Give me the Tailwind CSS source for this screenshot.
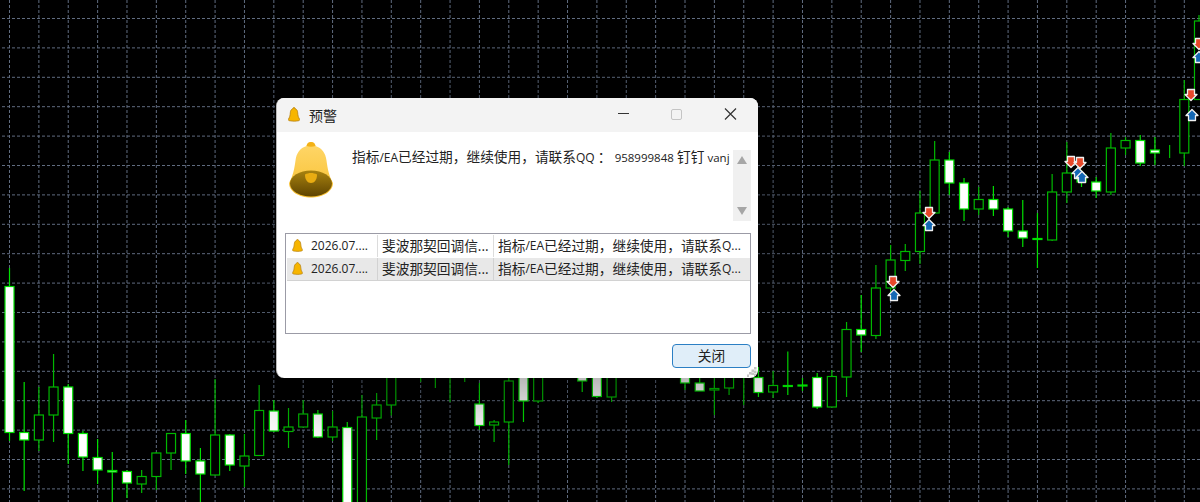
<!DOCTYPE html>
<html lang="en">
<head>
    <meta charset="UTF-8">
    <script src="https://cdn.jsdelivr.net/npm/@tailwindcss/browser@4"></script>
    <title>预警</title>
</head>
<body class="relative w-[1200px] h-[502px] overflow-hidden bg-black font-['Open_Sans','Noto_Sans_CJK_SC',sans-serif]">
    <!-- chart: grid + candles are filled in by the script at the bottom -->
    <svg id="chart" class="absolute inset-0" width="1200" height="502" viewBox="0 0 1200 502"></svg>

    <!-- alert window -->
    <div class="absolute left-[276px] top-[98px] w-[482px] h-[280px] flex flex-col rounded-lg overflow-hidden bg-white shadow-[0_12px_80px_rgba(0,0,0,0.45)] border-l border-[#b8b8b8]">
        <!-- title bar -->
        <div class="h-[34px] shrink-0 flex items-center bg-[#f3f3f3] pl-[11px]">
            <svg class="w-3 h-4" viewBox="0 0 12 16">
                <path d="M6 .6c.8 0 1.2.5 1.3 1.2 1.6.6 2.3 2 2.4 4 .1 2.6.7 4.700 1.800 6.200.5.800.1 1.500-.9 1.700-2.900.6-5.300.6-9.200 0-1-.2-1.400-.9-.9-1.700C1.600 10.500 2.200 8.400 2.300 5.800c.1-2 .8-3.400 2.400-4C4.800 1.100 5.200.6 6 .6z" fill="#f7b500" stroke="#b57f10" stroke-width=".8"/>
            </svg>
            <span class="ml-[9px] text-[14px] text-[#222]">预警</span>
            <div class="ml-auto flex items-center h-full">
                <svg class="w-[46px] h-[34px]" viewBox="0 0 46 34"><path d="M7 15.500h11" stroke="#333" stroke-width="1.200"/></svg>
                <svg class="w-[46px] h-[34px]" viewBox="0 0 46 34"><rect x="14.500" y="11.500" width="10" height="10" rx="1.500" fill="none" stroke="#c4c4c4"/></svg>
                <svg class="w-[54px] h-[34px] mr-[1px]" viewBox="0 0 54 34"><path d="M22 10.500l11 11M33 10.500l-11 11" stroke="#333" stroke-width="1.200"/></svg>
            </div>
        </div>

        <!-- message -->
        <div class="flex h-[83px] shrink-0 pl-3 pr-[7px]">
            <svg class="mt-[10px] w-[44px] h-[56px] shrink-0" viewBox="0 0 44 56">
                <defs>
                    <linearGradient id="bellBody" x1="0" y1="0" x2="0" y2="1">
                        <stop offset="0" stop-color="#ffd76a"/>
                        <stop offset="1" stop-color="#f8c030"/>
                    </linearGradient>
                    <linearGradient id="bellInner" x1="0" y1="0" x2="0" y2="1">
                        <stop offset="0" stop-color="#a88210"/>
                        <stop offset="1" stop-color="#5f4400"/>
                    </linearGradient>
                </defs>
                <path d="M22 0c2.500 0 4 1.500 4.500 4C33 6 36.500 11 37.500 18.500 38.600 27 40 34 44 41 44 50 33 55.500 22 55.500S0 50 0 41C4 34 5.400 27 6.500 18.500 7.500 11 11 6 17.500 4 18 1.500 19.500 0 22 0z" fill="url(#bellBody)"/>
                <path d="M17.500 4C18 1.500 19.500 0 22 0s4 1.500 4.500 4c-3 .9-6 .9-9 0z" fill="#f3b116"/>
                <ellipse cx="22" cy="41.500" rx="21" ry="13" fill="url(#bellInner)"/>
                <path d="M16 32.500c1.500-1 4-1.500 6-1.500s4.500.5 6 1.500C28 38 25.500 41 22 41s-6-3-6-8.500z" fill="#e9ac12"/>
            </svg>
            <p class="ml-[19px] mt-[15px] w-[380px] text-[12px] leading-[20px] whitespace-nowrap text-[#222] overflow-hidden">
                <span class="text-[13.7px]">指标</span>/EA<span class="text-[13.7px]">已经过期，继续使用，请联系</span>QQ <span class="text-[13.7px]">：</span> <span class="text-[11.5px]">958999848</span> <span class="text-[13.7px]">钉钉</span> <span class="text-[11.5px]">vanj</span>
            </p>
            <div class="ml-auto mt-[18px] w-[18px] h-[71px] bg-[#f0f0f0] flex flex-col items-center justify-between py-[6px]">
                <svg class="w-[10px] h-[8px]" viewBox="0 0 10 8"><path d="M5 0l5 8H0z" fill="#a6a6a6"/></svg>
                <svg class="w-[10px] h-[8px]" viewBox="0 0 10 8"><path d="M0 0h10L5 8z" fill="#a6a6a6"/></svg>
            </div>
        </div>

        <!-- history list -->
        <div class="ml-2 mr-[7px] mt-[18px] h-[101px] shrink-0 border border-[#9b9ba6] pt-px pl-px text-[13.7px] text-[#222]">
            <div class="flex h-[23px] items-center pb-px">
                <div class="w-[91px] h-full flex items-center border-r border-[#dcdcdc] pl-[5px]">
                    <svg class="w-[11px] h-[14px] shrink-0" viewBox="0 0 12 16"><path d="M6 .6c.8 0 1.200.5 1.300 1.200 1.600.6 2.300 2 2.400 4 .1 2.600.7 4.700 1.800 6.200.5.800.1 1.500-.9 1.700-2.900.6-5.300.6-9.200 0-1-.2-1.400-.9-.9-1.700C1.600 10.500 2.200 8.400 2.300 5.800c.1-2 .8-3.400 2.400-4C4.800 1.100 5.200.6 6 .6z" fill="#f7b500" stroke="#b57f10" stroke-width=".8"/></svg>
                    <span class="ml-[8px] text-[12px] font-medium text-[#222]">2026.07....</span>
                </div>
                <div class="w-[116px] h-full flex items-center border-r border-[#dcdcdc] pl-1 whitespace-nowrap">斐波那契回调信...</div>
                <div class="flex-1 h-full flex items-center pl-1 whitespace-nowrap">指标<span class="text-[12px]">/EA</span>已经过期，继续使用，请联系<span class="text-[12px]">Q...</span></div>
            </div>
            <div class="flex h-[23px] items-center bg-[#e8e8e8] border-b border-[#d2d2d2]">
                <div class="w-[91px] h-full flex items-center border-r border-[#d2d2d2] pl-[5px]">
                    <svg class="w-[11px] h-[14px] shrink-0" viewBox="0 0 12 16"><path d="M6 .6c.8 0 1.200.5 1.300 1.200 1.600.6 2.300 2 2.400 4 .1 2.600.7 4.700 1.800 6.200.5.800.1 1.500-.9 1.700-2.900.6-5.300.6-9.200 0-1-.2-1.400-.9-.9-1.700C1.600 10.500 2.200 8.400 2.300 5.800c.1-2 .8-3.400 2.400-4C4.800 1.100 5.200.6 6 .6z" fill="#f7b500" stroke="#b57f10" stroke-width=".8"/></svg>
                    <span class="ml-[8px] text-[12px] font-medium text-[#222]">2026.07....</span>
                </div>
                <div class="w-[116px] h-full flex items-center border-r border-[#d2d2d2] pl-1 whitespace-nowrap">斐波那契回调信...</div>
                <div class="flex-1 h-full flex items-center pl-1 whitespace-nowrap">指标<span class="text-[12px]">/EA</span>已经过期，继续使用，请联系<span class="text-[12px]">Q...</span></div>
            </div>
        </div>

        <!-- footer -->
        <div class="flex justify-end pr-[7px] pt-[10px]">
            <button class="w-[79px] h-6 rounded border border-[#2b7fc4] bg-[#e0eef9] text-[13.7px] text-[#222]">关闭</button>
        </div>

        <!-- resize grip -->
        <svg class="absolute right-px bottom-px w-[10px] h-[10px]" viewBox="0 0 10 10">
            <path d="M7 0h2.500v2.500H7zM4.500 2.500H7V5H4.500zM7 3.500h2.500V6H7zM2 5h2.500v2.500H2zM4.500 5.500H7V8H4.500zM7 6.500h2.500V9H7zM0 7.500h2V10H0z" fill="#c4c4c4"/>
        </svg>
    </div>

    <script>
        const svg = document.getElementById("chart");
        const STEP = 14.685;
        const GRID = "#606c80";

        function add(tag, attrs) {
            const el = document.createElementNS("http://www.w3.org/2000/svg", tag);
            for (const k in attrs) el.setAttribute(k, attrs[k]);
            svg.appendChild(el);
        }

        // grid
        for (let x = 9.5; x < 1200; x += STEP * 2) {
            add("line", { x1: x, x2: x, y1: 0, y2: 502, stroke: GRID, "stroke-dasharray": "3 2" });
        }
        for (let y = 18.5; y < 502; y += 29.4) {
            add("line", { x1: 2, x2: 1200, y1: y, y2: y, stroke: GRID, "stroke-dasharray": "3 2" });
        }

        // [index, wickTop, wickBottom, bodyTop, bodyBottom, filled]  (no body = just a wick)
        const candles = [
            [0, 268, 441, 286.5, 432.5, 1], [1, 382, 491, 432.5, 440, 1], [2, 387, 451, 415, 440, 0],
            [3, 354, 442, 387, 415, 0], [4, 384, 464, 387, 433.5, 1], [5, 431, 471, 433.5, 457, 1],
            [6, 439, 484, 457.5, 470, 1], [7, 452, 502, 470.5, 472, 1], [8, 470, 498, 471.5, 483, 1],
            [9, 470, 493, 476.5, 484, 0], [10, 452, 490, 453, 476.5, 0], [11, 433, 470, 433.5, 453, 0],
            [12, 420, 474, 433.5, 461, 1], [13, 448, 502, 461, 474, 1], [14, 379, 475, 435, 475, 0],
            [15, 434, 471, 435, 465, 1], [16, 434, 487, 456, 466, 0], [17, 385, 456, 410.5, 455.5, 0],
            [18, 400, 432, 411, 431, 1], [19, 408, 448, 427, 431.5, 0], [20, 400, 427, 414, 427, 0],
            [21, 410, 438, 414, 437, 1], [22, 411, 441, 427, 437, 0], [23, 422, 502, 427.5, 510, 1],
            [24, 395, 502, 417, 510, 0], [25, 393, 440, 405, 418, 0], [26, 370, 415.5, 370, 405, 0],
            [28, 370, 382], [29, 370, 388], [30, 370, 402], [31, 370, 382],
            [32, 383, 430, 404, 425.5, 1], [33, 420, 442, 422, 425, 0], [34, 370, 465, 381, 422, 0],
            [35, 370, 422, 370, 401, 1], [36, 370, 403, 370, 401, 0],
            [39, 370, 392, 370, 381, 1], [40, 370, 398, 370, 396.5, 1], [41, 370, 402, 370, 397, 0],
            [46, 370, 390, 370, 383, 1], [47, 370, 391, 383, 391, 1], [48, 370, 415, 388.5, 390, 0],
            [49, 370, 395, 370, 388, 0], [50, 370, 405], [51, 367, 397, 377.5, 392.5, 1],
            [52, 371, 398, 385.5, 392, 0], [53, 351.5, 395, 385.5, 386.5, 1], [54, 378, 391, 385, 386, 1],
            [55, 373, 409, 377.5, 407, 1], [56, 370, 407, 376.5, 407, 0], [57, 322, 397, 329.5, 377, 0],
            [58, 295, 352, 329.5, 335, 1], [59, 265, 339, 288, 335.5, 0], [60, 245, 300, 260, 288, 0],
            [61, 244, 271, 251.5, 260.5, 0], [62, 191, 264, 213, 251.5, 0], [63, 141, 213, 160, 213, 0],
            [64, 152, 195, 160, 183, 1], [65, 178, 221, 183, 209, 1], [66, 187, 215, 199.5, 209, 0],
            [67, 186, 216, 199.5, 209, 1], [68, 207, 237, 209, 231, 1], [69, 200, 247, 231, 238, 1],
            [70, 213, 268, 238.5, 239.5, 1], [71, 174, 241, 192, 240, 0], [72, 142, 203, 173, 192, 0],
            [73, 170, 187, 175, 182, 1], [74, 177, 198, 182, 191, 1], [75, 133, 195, 148, 192, 0],
            [76, 137, 155, 140.5, 148, 0], [77, 135, 166, 140.5, 163, 1], [78, 137, 165, 150, 153, 1],
            [79, 145, 158], [80, 80, 166, 99.5, 153, 0], [81, 15, 100, 21, 99.5, 0]
        ];

        for (const [i, wt, wb, bt, bb, filled] of candles) {
            const x = 9.5 + STEP * i;
            const color = filled ? "#00e000" : "#00b800";
            add("line", { x1: x, x2: x, y1: wt, y2: wb, stroke: color, "stroke-width": 1.2 });
            if (bt !== undefined) {
                add("rect", {
                    x: x - 4.5, y: bt, width: 9, height: bb - bt,
                    fill: filled ? "#fff" : "#000", stroke: color, "stroke-width": 1.2
                });
            }
        }

        // signal arrows
        function arrow(x, y, down, color) {
            const d = down
                ? `M${x - 3.5} ${y - 5.5}h7v5h2.500l-6 6-6-6h2.500z`
                : `M${x - 3.5} ${y + 5.5}h7v-5h2.500l-6-6-6 6h2.500z`;
            add("path", { d, fill: color, stroke: "#f0f0f0", "stroke-width": 1.3, "stroke-linejoin": "round" });
        }
        const RED = "#e8482a", BLUE = "#1468b4";
        [[893, 282], [929, 213], [1071, 162], [1080, 163], [1191, 95], [1199, 44]].forEach(p => arrow(p[0], p[1], true, RED));
        [[894, 295], [929, 225], [1078, 173], [1082, 177], [1192, 115], [1199, 57]].forEach(p => arrow(p[0], p[1], false, BLUE));
    </script>
</body>
</html>
